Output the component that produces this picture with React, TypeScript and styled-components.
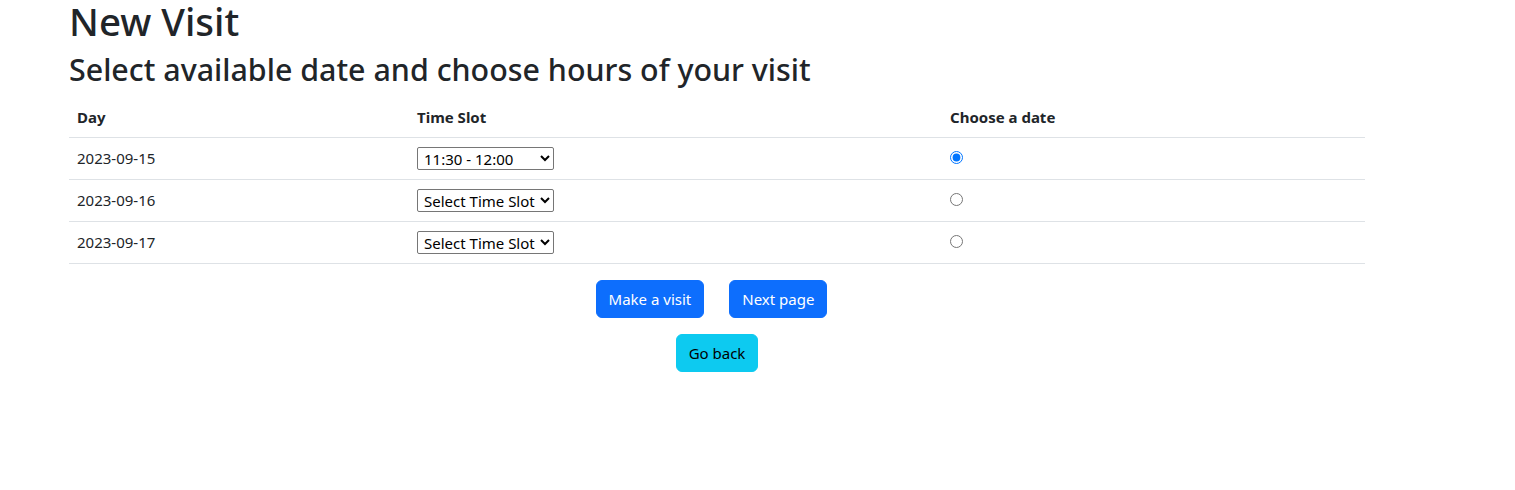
import React, { useState } from "react";
import styled, { createGlobalStyle } from "styled-components";

const Global = createGlobalStyle`
  *, *::before, *::after { box-sizing: border-box; }
  body {
    margin: 0;
    background: #fff;
    color: #212529;
    font-family: "Noto Sans", "Open Sans", sans-serif;
    font-size: 16px;
    line-height: 1.5;
  }
`;

const Container = styled.div`
  width: 1296px;
  margin-left: 69px;
`;

const Title = styled.h1`
  font-size: 38.5px;
  font-weight: 500;
  line-height: 1.1;
  margin: 0 0 9.5px;
`;

const Subtitle = styled.h2`
  font-size: 30.4px;
  font-weight: 500;
  line-height: 1.2;
  margin: 0 0 8px;
`;

const Table = styled.table`
  width: 100%;
  border-collapse: collapse;
  margin-bottom: 16px;
`;

const Th = styled.th<{ $w?: number }>`
  text-align: left;
  font-weight: 700;
  font-size: 15px;
  padding: 9px 8px 7px;
  height: 41px;
  border-bottom: 1px solid #dee2e6;
  vertical-align: middle;
  ${(p) => (p.$w ? `width: ${p.$w}px;` : "")}
`;

const Td = styled.td`
  padding: 8px;
  height: 42px;
  font-size: 15px;
  border-bottom: 1px solid #dee2e6;
  vertical-align: middle;
`;

const Select = styled.select`
  width: 137px;
  height: 23px;
  font-family: "Noto Sans", sans-serif;
  font-size: 15px;
  color: #000;
  border: 1px solid #767676;
  border-radius: 2px;
  background: #fff;
  padding: 0 0 0 2px;
  display: block;
`;

const Radio = styled.input`
  width: 13px;
  height: 13px;
  margin: 0 0 2px 0;
  display: block;
  accent-color: #0075ff;
`;

const Actions = styled.div`
  display: flex;
  flex-direction: column;
  align-items: center;
  gap: 16px;
`;

const ButtonRow = styled.div`
  display: flex;
  gap: 25px;
  padding-right: 11px;
`;

const Button = styled.button<{ $variant: "primary" | "info" }>`
  font-family: "Noto Sans", sans-serif;
  font-size: 15px;
  line-height: 24px;
  padding: 6px 12px;
  height: 38px;
  border-radius: 6px;
  border: 1px solid ${(p) => (p.$variant === "primary" ? "#0d6efd" : "#0dcaf0")};
  background: ${(p) => (p.$variant === "primary" ? "#0d6efd" : "#0dcaf0")};
  color: ${(p) => (p.$variant === "primary" ? "#fff" : "#000")};
  cursor: pointer;
`;

const days = ["2023-09-15", "2023-09-16", "2023-09-17"];

export default function App() {
  const [chosen, setChosen] = useState(0);
  return (
    <>
      <Global />
      <Container>
        <Title>New Visit</Title>
        <Subtitle>Select available date and choose hours of your visit</Subtitle>
        <Table>
          <thead>
            <tr>
              <Th $w={340}>Day</Th>
              <Th $w={533}>Time Slot</Th>
              <Th>Choose a date</Th>
            </tr>
          </thead>
          <tbody>
            {days.map((d, i) => (
              <tr key={d}>
                <Td>{d}</Td>
                <Td>
                  <Select defaultValue={i === 0 ? "1130" : ""}>
                    <option value="">Select Time Slot</option>
                    <option value="1130">11:30 - 12:00</option>
                  </Select>
                </Td>
                <Td>
                  <Radio
                    type="radio"
                    name="date"
                    checked={chosen === i}
                    onChange={() => setChosen(i)}
                  />
                </Td>
              </tr>
            ))}
          </tbody>
        </Table>
        <Actions>
          <ButtonRow>
            <Button $variant="primary">Make a visit</Button>
            <Button $variant="primary">Next page</Button>
          </ButtonRow>
          <Button $variant="info">Go back</Button>
        </Actions>
      </Container>
    </>
  );
}
